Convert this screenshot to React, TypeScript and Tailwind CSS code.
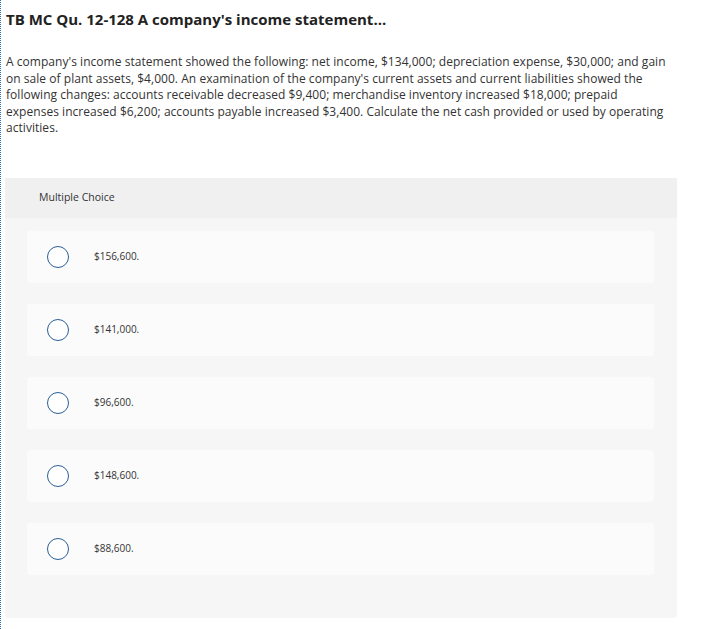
const options = ['$156,600.', '$141,000.', '$96,600.', '$148,600.', '$88,600.']

const lines = [
  "A company's income statement showed the following: net income, $134,000; depreciation expense, $30,000; and gain",
  "on sale of plant assets, $4,000. An examination of the company's current assets and current liabilities showed the",
  'following changes: accounts receivable decreased $9,400; merchandise inventory increased $18,000; prepaid',
  'expenses increased $6,200; accounts payable increased $3,400. Calculate the net cash provided or used by operating',
  'activities.',
]

export default function App() {
  return (
    <div
      className="h-[629px] w-[710px] overflow-hidden border-l border-dotted border-[#2f6db5] bg-white text-[#333]"
      style={{ fontFamily: '"Open Sans", "Liberation Sans", sans-serif' }}
    >
      <div className="pl-[5px]">
        <h1 className="pt-[9px] text-[15px] font-bold leading-[20px] text-[#222]">
          TB MC Qu. 12-128 A company's income statement...
        </h1>
        <p className="mt-[25px] text-[12px] leading-[16.5px] tracking-[0.04px] text-[#333]">
          {lines.map((l) => (
            <span key={l} className="block whitespace-nowrap">
              {l}
            </span>
          ))}
        </p>
      </div>

      <div className="ml-[4px] mt-[41px] w-[672px] rounded-sm bg-[#f6f6f6]">
        <div className="flex h-[40px] items-center bg-[#f0f0f0] pl-[34px] text-[10.5px] text-[#333]">
          Multiple Choice
        </div>
        <div className="flex flex-col gap-[21px] pb-[43px] pl-[22px] pr-[23px] pt-[13px]">
          {options.map((o) => (
            <div key={o} className="flex h-[52px] items-center rounded-[3px] bg-[#fbfbfb]">
              <span className="ml-[20px] h-[22px] w-[22px] rounded-full border-[1.5px] border-[#2a5f97] bg-white" />
              <span className="ml-[25px] text-[10px] text-[#333]">{o}</span>
            </div>
          ))}
        </div>
      </div>
    </div>
  )
}
